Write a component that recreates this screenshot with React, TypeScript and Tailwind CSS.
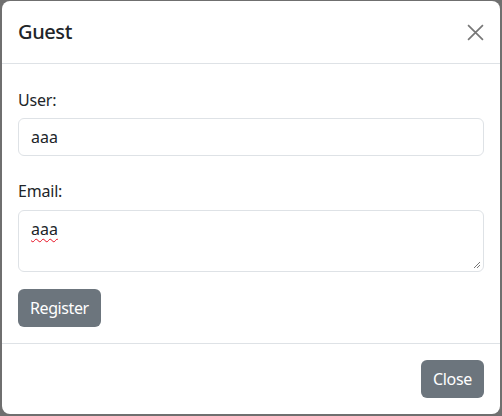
export default function App() {
  return (
    <div
      className="flex h-[416px] w-[502px] bg-[#6f6f6f] pl-[2px] pt-px text-[#212529]"
      style={{ fontFamily: '"Noto Sans", "Open Sans", sans-serif' }}
    >
      <div className="flex h-[413px] w-[498px] flex-col rounded-lg bg-white">
        <div className="flex h-[63px] items-center justify-between border-b border-[#dee2e6] px-4">
          <h5 className="text-xl font-medium leading-[30px] tracking-[-0.4px]">Guest</h5>
          <button className="flex h-8 w-8 items-center justify-end text-[#777]" aria-label="Close">
            <svg width="17" height="17" viewBox="0 0 16 16" fill="none" stroke="currentColor" strokeWidth="1.6">
              <path d="M1 1L15 15M15 1L1 15" />
            </svg>
          </button>
        </div>
        <div className="flex flex-1 flex-col border-b border-[#dee2e6] px-4 pt-6">
          <label className="text-base leading-6 tracking-[-0.2px]">User:</label>
          <input
            defaultValue="aaa"
            className="mt-1.5 h-[38px] w-full rounded-md border border-[#dee2e6] px-3 text-base leading-6 outline-none"
          />
          <label className="mt-[23px] text-base leading-6 tracking-[-0.2px]">Email:</label>
          <div className="relative mt-[7px] h-[62px] w-full rounded-md border border-[#dee2e6] px-3 py-1.5 text-base leading-6">
            <span className="underline decoration-[#e81123] decoration-wavy decoration-1 underline-offset-[3px]">aaa</span>
            <svg className="absolute bottom-0.5 right-0.5" width="9" height="9" viewBox="0 0 9 9" stroke="#777" strokeWidth="1">
              <path d="M8 2L2 8M8 5L5 8" />
            </svg>
          </div>
          <div className="mt-[17px]">
            <button className="h-[38px] rounded-md bg-[#6c757d] px-3 text-base leading-6 tracking-[-0.4px] text-white">
              Register
            </button>
          </div>
        </div>
        <div className="flex justify-end px-4 pb-4 pt-4">
          <button className="h-[38px] rounded-md bg-[#6c757d] px-3 text-base leading-6 tracking-[-0.3px] text-white">
            Close
          </button>
        </div>
      </div>
    </div>
  );
}
